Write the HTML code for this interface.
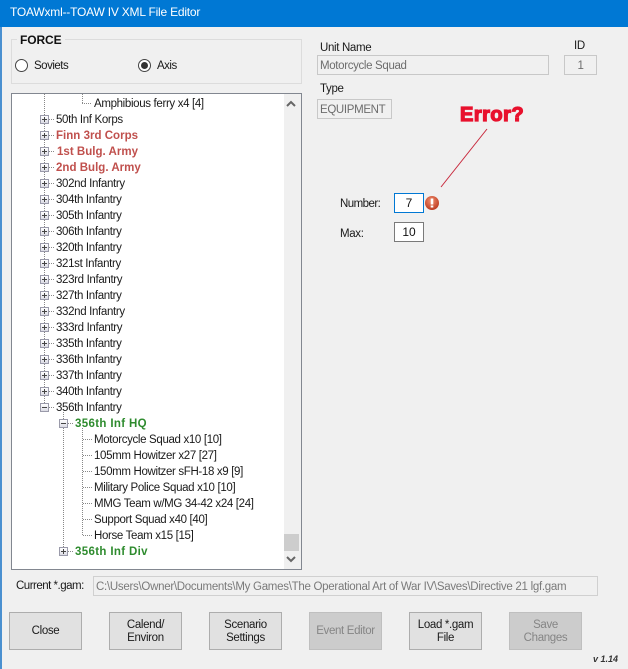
<!DOCTYPE html>
<html><head><meta charset="utf-8">
<style>
html,body{margin:0;padding:0;}
body{width:628px;height:669px;position:relative;overflow:hidden;background:#f0f0f0;font-family:"Liberation Sans",sans-serif;font-size:11.5px;letter-spacing:-.34px;color:#1a1a1a;}
div{position:absolute;box-sizing:border-box;}
.t{white-space:nowrap;line-height:16px;height:16px;}
.tr .t{margin-top:1px;}
.r{color:#c0504d;font-weight:bold;font-size:11.5px;letter-spacing:.02px;}
.g{color:#2e8b2e;font-weight:bold;font-size:11.5px;letter-spacing:.35px;}
.box{width:9px;height:9px;border:1px solid #9a9aaa;background:linear-gradient(#fff,#dcdce4);}
.box:before{content:"";position:absolute;left:1px;top:3px;width:5px;height:1px;background:#444;}
.box.p:after{content:"";position:absolute;left:3px;top:1px;width:1px;height:5px;background:#444;}
.dv{width:1px;background:repeating-linear-gradient(#888 0 1px,transparent 1px 2px);}
.dh{height:1px;background:repeating-linear-gradient(90deg,#888 0 1px,transparent 1px 2px);}
.b{width:73px;height:38px;padding-top:1px;background:#e1e1e1;border:1px solid #adadad;text-align:center;display:flex;align-items:center;justify-content:center;line-height:13px;font-size:11.5px;}
.d{background:#cccccc;border-color:#bfbfbf;color:#858585;}
.f{background:#f0f0f0;border:1px solid #c8c8c8;color:#6d6d6d;line-height:20px;padding-left:2px;white-space:nowrap;overflow:hidden;}
.n{width:30px;height:20px;background:#fff;border:1px solid #7a7a7a;text-align:center;line-height:18px;font-size:12px;color:#111;letter-spacing:0;}
</style></head>
<body>
<div style="left:0;top:0;width:628px;height:27px;background:#0078d4;"></div>
<div class="t" style="left:10px;top:4px;color:#fff;font-size:12px;line-height:16px;letter-spacing:-.21px;">TOAWxml--TOAW IV XML File Editor</div>
<div style="left:0;top:27px;width:2px;height:642px;background:#4a90d0;"></div>

<div style="left:11px;top:39px;width:291px;height:45px;border:1px solid #dcdcdc;"></div>
<div class="t" style="left:17px;top:32px;background:#f0f0f0;padding:0 3px;font-weight:bold;font-size:12px;letter-spacing:-.1px;color:#111;">FORCE</div>
<div style="left:15px;top:59px;width:13px;height:13px;border:1px solid #444;border-radius:50%;background:#fff;"></div>
<div class="t" style="left:34px;top:58px;letter-spacing:-.5px;">Soviets</div>
<div style="left:138px;top:59px;width:13px;height:13px;border:1px solid #444;border-radius:50%;background:#fff;"></div>
<div style="left:141px;top:62px;width:7px;height:7px;border-radius:50%;background:#333;"></div>
<div class="t" style="left:157px;top:58px;letter-spacing:-.5px;">Axis</div>

<div style="left:11px;top:93px;width:291px;height:477px;background:#fff;border:1px solid #828790;"></div>
<div style="left:284px;top:94px;width:17px;height:475px;background:#f0f0f0;"></div>
<div style="left:284px;top:534px;width:15px;height:17px;background:#cdcdcd;"></div>
<svg style="position:absolute;left:283px;top:98px" width="16" height="12"><path d="M4 8 L8 4 L12 8" fill="none" stroke="#666" stroke-width="2"/></svg>
<svg style="position:absolute;left:283px;top:553px" width="16" height="12"><path d="M4 4 L8 8 L12 4" fill="none" stroke="#666" stroke-width="2"/></svg>

<div class="dv" style="left:44px;top:94px;height:313px;"></div>
<div class="dv" style="left:63px;top:412px;height:139px;"></div>
<div class="dv" style="left:82px;top:94px;height:9px;"></div>
<div class="dh" style="left:82px;top:103px;width:10px;"></div>
<div class="dv" style="left:82px;top:428px;height:107px;"></div>

<div class="tr">
<div class="t" style="left:94px;top:95px;">Amphibious ferry x4 [4]</div>

<div class="dh" style="left:49px;top:119px;width:5px;"></div><div class="box p" style="left:40px;top:115px;"></div><div class="t" style="left:56px;top:111px;">50th Inf Korps</div>
<div class="dh" style="left:49px;top:135px;width:5px;"></div><div class="box p" style="left:40px;top:131px;"></div><div class="t r" style="left:56px;top:127px;">Finn 3rd Corps</div>
<div class="dh" style="left:49px;top:151px;width:5px;"></div><div class="box p" style="left:40px;top:147px;"></div><div class="t r" style="left:57px;top:143px;">1st Bulg. Army</div>
<div class="dh" style="left:49px;top:167px;width:5px;"></div><div class="box p" style="left:40px;top:163px;"></div><div class="t r" style="left:56px;top:159px;">2nd Bulg. Army</div>
<div class="dh" style="left:49px;top:183px;width:5px;"></div><div class="box p" style="left:40px;top:179px;"></div><div class="t" style="left:56px;top:175px;">302nd Infantry</div>
<div class="dh" style="left:49px;top:199px;width:5px;"></div><div class="box p" style="left:40px;top:195px;"></div><div class="t" style="left:56px;top:191px;">304th Infantry</div>
<div class="dh" style="left:49px;top:215px;width:5px;"></div><div class="box p" style="left:40px;top:211px;"></div><div class="t" style="left:56px;top:207px;">305th Infantry</div>
<div class="dh" style="left:49px;top:231px;width:5px;"></div><div class="box p" style="left:40px;top:227px;"></div><div class="t" style="left:56px;top:223px;">306th Infantry</div>
<div class="dh" style="left:49px;top:247px;width:5px;"></div><div class="box p" style="left:40px;top:243px;"></div><div class="t" style="left:56px;top:239px;">320th Infantry</div>
<div class="dh" style="left:49px;top:263px;width:5px;"></div><div class="box p" style="left:40px;top:259px;"></div><div class="t" style="left:56px;top:255px;">321st Infantry</div>
<div class="dh" style="left:49px;top:279px;width:5px;"></div><div class="box p" style="left:40px;top:275px;"></div><div class="t" style="left:56px;top:271px;">323rd Infantry</div>
<div class="dh" style="left:49px;top:295px;width:5px;"></div><div class="box p" style="left:40px;top:291px;"></div><div class="t" style="left:56px;top:287px;">327th Infantry</div>
<div class="dh" style="left:49px;top:311px;width:5px;"></div><div class="box p" style="left:40px;top:307px;"></div><div class="t" style="left:56px;top:303px;">332nd Infantry</div>
<div class="dh" style="left:49px;top:327px;width:5px;"></div><div class="box p" style="left:40px;top:323px;"></div><div class="t" style="left:56px;top:319px;">333rd Infantry</div>
<div class="dh" style="left:49px;top:343px;width:5px;"></div><div class="box p" style="left:40px;top:339px;"></div><div class="t" style="left:56px;top:335px;">335th Infantry</div>
<div class="dh" style="left:49px;top:359px;width:5px;"></div><div class="box p" style="left:40px;top:355px;"></div><div class="t" style="left:56px;top:351px;">336th Infantry</div>
<div class="dh" style="left:49px;top:375px;width:5px;"></div><div class="box p" style="left:40px;top:371px;"></div><div class="t" style="left:56px;top:367px;">337th Infantry</div>
<div class="dh" style="left:49px;top:391px;width:5px;"></div><div class="box p" style="left:40px;top:387px;"></div><div class="t" style="left:56px;top:383px;">340th Infantry</div>
<div class="dh" style="left:49px;top:407px;width:5px;"></div><div class="box" style="left:40px;top:403px;"></div><div class="t" style="left:56px;top:399px;">356th Infantry</div>

<div class="dh" style="left:68px;top:423px;width:6px;"></div><div class="box" style="left:59px;top:419px;"></div><div class="t g" style="left:75px;top:415px;">356th Inf HQ</div>

<div class="dh" style="left:83px;top:439px;width:9px;"></div><div class="t" style="left:94px;top:431px;">Motorcycle Squad x10 [10]</div>
<div class="dh" style="left:83px;top:455px;width:9px;"></div><div class="t" style="left:94px;top:447px;">105mm Howitzer x27 [27]</div>
<div class="dh" style="left:83px;top:471px;width:9px;"></div><div class="t" style="left:94px;top:463px;">150mm Howitzer sFH-18 x9 [9]</div>
<div class="dh" style="left:83px;top:487px;width:9px;"></div><div class="t" style="left:94px;top:479px;">Military Police Squad x10 [10]</div>
<div class="dh" style="left:83px;top:503px;width:9px;"></div><div class="t" style="left:94px;top:495px;">MMG Team w/MG 34-42 x24 [24]</div>
<div class="dh" style="left:83px;top:519px;width:9px;"></div><div class="t" style="left:94px;top:511px;">Support Squad x40 [40]</div>
<div class="dh" style="left:83px;top:535px;width:9px;"></div><div class="t" style="left:94px;top:527px;">Horse Team x15 [15]</div>

<div class="dh" style="left:68px;top:551px;width:6px;"></div><div class="box p" style="left:59px;top:547px;"></div><div class="t g" style="left:75px;top:543px;">356th Inf Div</div>
</div>

<div class="t" style="left:320px;top:40px;">Unit Name</div>
<div class="f" style="left:317px;top:55px;width:232px;height:20px;">Motorcycle Squad</div>
<div class="t" style="left:574px;top:38px;">ID</div>
<div class="f" style="left:564px;top:55px;width:33px;height:20px;text-align:center;padding:0;">1</div>
<div class="t" style="left:320px;top:81px;">Type</div>
<div class="f" style="left:317px;top:99px;width:75px;height:20px;">EQUIPMENT</div>

<div class="t" style="left:460px;top:105px;height:20px;line-height:20px;font-weight:bold;font-size:20px;color:#e8112d;-webkit-text-stroke:1.3px #e8112d;letter-spacing:.5px;">Error?</div>
<svg style="position:absolute;left:435px;top:125px" width="60" height="66"><path d="M52 4 L6 62" stroke="#c8283c" stroke-width="1" fill="none"/></svg>

<div class="t" style="left:340px;top:196px;letter-spacing:-.55px;">Number:</div>
<div class="n" style="left:394px;top:193px;border-color:#0078d4;">7</div>
<svg style="position:absolute;left:424px;top:195px" width="16" height="16">
<defs><radialGradient id="e" cx=".45" cy=".35" r=".7"><stop offset="0" stop-color="#f29070"/><stop offset="1" stop-color="#b8341a"/></radialGradient></defs>
<circle cx="8" cy="8" r="7" fill="url(#e)"/><rect x="6.7" y="3.5" width="2.6" height="6" fill="#fff"/><rect x="6.7" y="10.5" width="2.6" height="2" fill="#fff"/></svg>
<div class="t" style="left:340px;top:226px;">Max:</div>
<div class="n" style="left:394px;top:222px;">10</div>

<div class="t" style="left:16px;top:578px;letter-spacing:-.5px;">Current *.gam:</div>
<div class="f" style="left:93px;top:576px;width:505px;height:20px;color:#7a7a7a;border-color:#d0d0d0;letter-spacing:-.28px;">C:\Users\Owner\Documents\My Games\The Operational Art of War IV\Saves\Directive 21 lgf.gam</div>

<div class="b" style="left:9px;top:612px;">Close</div>
<div class="b" style="left:109px;top:612px;">Calend/<br>Environ</div>
<div class="b" style="left:209px;top:612px;">Scenario<br>Settings</div>
<div class="b d" style="left:309px;top:612px;">Event Editor</div>
<div class="b" style="left:409px;top:612px;">Load *.gam<br>File</div>
<div class="b d" style="left:509px;top:612px;">Save<br>Changes</div>
<div class="t" style="left:593px;top:651px;font-size:9px;font-style:italic;font-weight:bold;letter-spacing:0;color:#333;">v 1.14</div>
</body></html>
